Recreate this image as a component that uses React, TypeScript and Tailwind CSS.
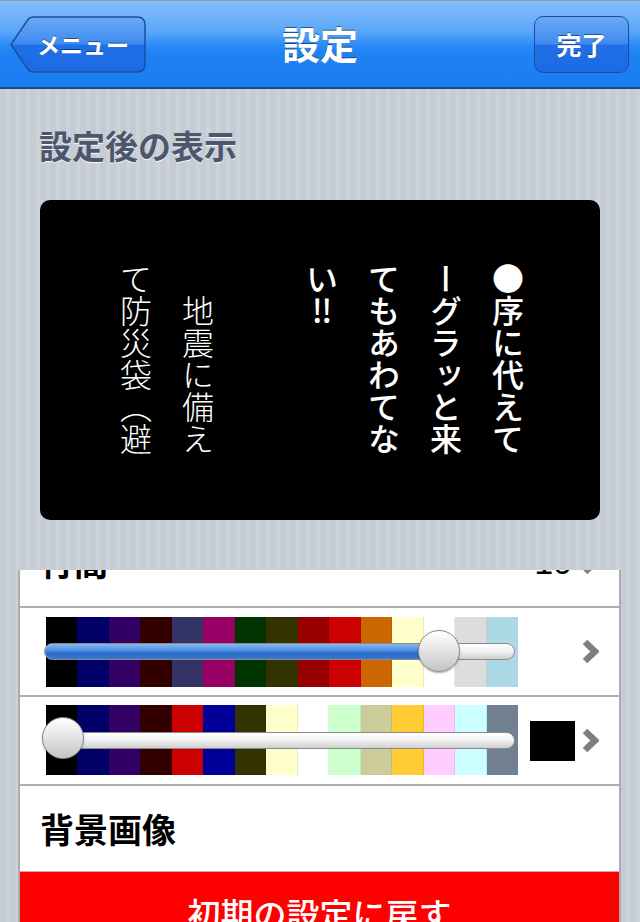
import React from "react";

const row1 = ["#000000","#000066","#330066","#330000","#333366","#990066","#003300","#333300","#990000","#cc0000","#cc6600","#ffffcc","#ffffff","#dddddd","#add8e6"];
const row2 = ["#000000","#000066","#330066","#330000","#cc0000","#000099","#333300","#ffffcc","#ffffff","#ccffcc","#cccc99","#ffcc33","#ffccff","#ccffff","#708090"];

function Chevron() {
  return (
    <svg width="17" height="25" viewBox="0 0 17 25" className="shrink-0">
      <polyline points="3,3 13,12.5 3,22" fill="none" stroke="#7f7f7f" strokeWidth="6.5" strokeLinejoin="miter" strokeLinecap="butt" />
    </svg>
  );
}

function SwatchSlider({ colors, thumbX, trackTop, thumbTop }: { colors: string[]; thumbX: number; trackTop: number; thumbTop: number }) {
  return (
    <div className="relative w-[472px] h-[70px]">
      <div className="grid grid-cols-15 h-full">
        {colors.map((c, i) => (
          <div key={i} className="h-full border-r border-[rgba(0,0,0,0.08)] last:border-r-0" style={{ backgroundColor: c }} />
        ))}
      </div>
      <div
        className="absolute left-[-2px] w-[471px] h-[17px] rounded-full overflow-hidden border border-[#8a8a8a] bg-[linear-gradient(to_bottom,#ffffff_0%,#f4f4f4_45%,#d0d0d0_100%)]"
        style={{ top: trackTop }}
      >
        <div
          className="h-full bg-[linear-gradient(to_bottom,#8ab8f0_0%,#4a8ce0_45%,#2a6ccc_60%,#3a78d0_100%)]"
          style={{ width: thumbX + 2 }}
        />
      </div>
      <div
        className="absolute w-[42px] h-[42px] rounded-full border border-[#8c8c8c] bg-[linear-gradient(to_bottom,#ffffff_0%,#e6e6e6_45%,#c4c4c4_100%)] shadow-[0_1px_2px_rgba(0,0,0,0.35)]"
        style={{ left: thumbX - 21, top: thumbTop }}
      />
    </div>
  );
}

export default function App() {
  const ja = "font-['Noto_Sans_CJK_JP','Noto_Sans_CJK_SC',sans-serif]";
  return (
    <div className={`w-[640px] h-[922px] overflow-hidden flex flex-col ${ja} bg-[repeating-linear-gradient(90deg,#c5ccd4_0px,#c5ccd4_6px,#cbd2d9_6px,#cbd2d9_10px)]`}>
      {/* Nav bar */}
      <div className="relative h-[89px] shrink-0 border-t border-[#8d9cb0] border-b-2 border-b-[#1d477f] bg-[linear-gradient(to_bottom,#84bffb_0%,#5ba7f8_35%,#2f8ef6_50%,#1f83f4_60%,#1a7cf1_100%)] flex items-center justify-between pl-[10px] pr-[11px]">
        <div className="relative w-[136px] h-[57px] flex items-center justify-end pr-[17px]">
          <svg className="absolute inset-0" width="136" height="57" viewBox="0 0 136 57">
            <defs>
              <linearGradient id="bb" x1="0" y1="0" x2="0" y2="1">
                <stop offset="0" stopColor="#6aaaf6" />
                <stop offset="0.48" stopColor="#3f8bf0" />
                <stop offset="0.52" stopColor="#1f70e8" />
                <stop offset="1" stopColor="#1c69e4" />
              </linearGradient>
            </defs>
            <path d="M1,28.5 L18,3.5 Q20,1 24,1 L127,1 Q135,1 135,9 L135,48 Q135,56 127,56 L24,56 Q20,56 18,53.5 Z" fill="url(#bb)" stroke="#1b4f9e" strokeWidth="1.5" />
          </svg>
          <span className="relative text-white font-bold text-[23px] leading-none [text-shadow:0_-1px_0_rgba(0,0,0,0.45)]">メニュー</span>
        </div>
        <div className="absolute left-0 right-0 top-0 bottom-0 flex items-center justify-center pointer-events-none">
          <span className="text-white font-bold text-[38px] leading-none [text-shadow:0_-1px_0_rgba(0,0,0,0.5)] -mt-[2px]">設定</span>
        </div>
        <div className="relative w-[95px] h-[57px] rounded-[9px] border-[1.5px] border-[#1b4f9e] bg-[linear-gradient(to_bottom,#6aaaf6_0%,#3f8bf0_48%,#1f70e8_52%,#1c69e4_100%)] flex items-center justify-center">
          <span className="text-white font-bold text-[25px] leading-none [text-shadow:0_-1px_0_rgba(0,0,0,0.45)]">完了</span>
        </div>
      </div>

      {/* Section header */}
      <div className="mt-[37px] pl-[39px] text-[33px] leading-[38px] font-bold text-[#4c566c] [text-shadow:0_1px_0_rgba(255,255,255,0.9)]">
        設定後の表示
      </div>

      {/* Preview */}
      <div className="mt-[36px] mx-[40px] h-[320px] shrink-0 rounded-[10px] bg-black flex justify-end pr-[61px] pt-[63px]">
        <div className="[writing-mode:vertical-rl] text-white text-[32px] leading-[62px] h-[200px]">
          <span className="font-medium">●序に代えて<br />ーグラッと来<br />てもあわてな<br />い‼<br /><br /></span>
          <span className="font-light">　地震に備え<br />て防災袋（避</span>
        </div>
      </div>

      {/* Table card */}
      <div className="mt-[50px] ml-[18px] mr-[19px] flex-1 overflow-hidden bg-white border-x-2 border-[#a9adb2] flex flex-col">
        <div className="h-[88px] shrink-0 -mt-[52px] flex items-center justify-between pl-[20px] pr-[20px]">
          <span className="text-[34px] font-bold text-black leading-none">行間</span>
          <div className="flex items-center gap-[10px]">
            <span className="text-[34px] text-black leading-none font-['Liberation_Sans',sans-serif]">10</span>
            <Chevron />
          </div>
        </div>
        <div className="h-[2px] shrink-0 bg-[#abafb4]" />
        <div className="h-[87px] shrink-0 flex items-start pl-[26px] pr-[20px] pt-[9px] relative">
          <SwatchSlider colors={row1} thumbX={393} trackTop={26} thumbTop={13} />
          <div className="absolute right-[20px] top-[31px]"><Chevron /></div>
        </div>
        <div className="h-[2px] shrink-0 bg-[#abafb4]" />
        <div className="h-[87px] shrink-0 flex items-start pl-[26px] pr-[20px] pt-[8px] relative">
          <SwatchSlider colors={row2} thumbX={17} trackTop={27} thumbTop={12} />
          <div className="absolute left-[510px] top-[24px] w-[45px] h-[40px] bg-black" />
          <div className="absolute right-[20px] top-[31px]"><Chevron /></div>
        </div>
        <div className="h-[2px] shrink-0 bg-[#abafb4]" />
        <div className="h-[85px] shrink-0 flex items-center pl-[20px]">
          <span className="text-[34px] font-bold text-black leading-none">背景画像</span>
        </div>
        <div className="h-[1px] shrink-0 bg-[#e8a0a0]" />
        <div className="flex-1 bg-[#ff0000] flex justify-center pt-[21px]">
          <span className="text-white text-[33px] font-medium leading-[40px]">初期の設定に戻す</span>
        </div>
      </div>
    </div>
  );
}
